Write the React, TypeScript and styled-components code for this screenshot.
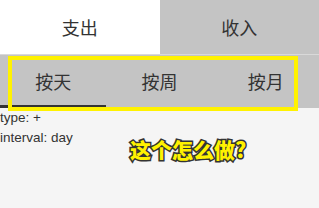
import React, { useState } from "react";
import styled, { createGlobalStyle } from "styled-components";

const Global = createGlobalStyle`
  html, body {
    margin: 0;
    padding: 0;
    background: #f5f5f5;
  }
  body {
    font-family: "Liberation Sans", Arial, "Noto Sans CJK SC", sans-serif;
    color: #333;
  }
`;

const Page = styled.div`
  position: relative;
  width: 319px;
  height: 208px;
  background: #f5f5f5;
  overflow: hidden;
`;

const TypeTabs = styled.div`
  display: grid;
  grid-template-columns: 1fr 1fr;
  height: 54px;
  border-bottom: 1px solid #d9d9d9;
`;

const TypeTab = styled.div<{ $active: boolean }>`
  display: flex;
  align-items: center;
  justify-content: center;
  background: ${(p) => (p.$active ? "#ffffff" : "#c4c4c4")};
  font-family: "Noto Sans CJK SC", sans-serif;
  font-size: 18px;
  color: #333;
  cursor: pointer;
`;

const IntervalTabs = styled.div`
  display: grid;
  grid-template-columns: repeat(3, 1fr);
  height: 53px;
  background: #c4c4c4;
`;

const IntervalTab = styled.div<{ $active: boolean }>`
  display: flex;
  align-items: center;
  justify-content: center;
  box-sizing: border-box;
  padding-top: 2px;
  border-bottom: 3px solid ${(p) => (p.$active ? "#333" : "transparent")};
  font-family: "Noto Sans CJK SC", sans-serif;
  font-size: 18px;
  color: #333;
  cursor: pointer;
`;

const Info = styled.div`
  display: flex;
  flex-direction: column;
  font-family: "Liberation Sans", Arial, sans-serif;
  font-size: 13.5px;
  line-height: 20px;
  color: #333;
`;

const Highlight = styled.div`
  position: absolute;
  left: 8px;
  top: 56px;
  width: 290px;
  height: 55px;
  box-sizing: border-box;
  border: 4px solid #fff200;
  pointer-events: none;
`;

const Note = styled.div`
  position: absolute;
  left: 130px;
  top: 136px;
  font-family: "Noto Sans CJK SC", sans-serif;
  font-weight: 900;
  font-size: 21px;
  line-height: 26px;
  color: #fff200;
  -webkit-text-stroke: 3px #333;
  paint-order: stroke fill;
  white-space: nowrap;
`;

export default function App() {
  const [type, setType] = useState("-");
  const [interval, setInterval] = useState("day");
  return (
    <Page>
      <Global />
      <TypeTabs>
        <TypeTab $active={type === "-"} onClick={() => setType("-")}>支出</TypeTab>
        <TypeTab $active={type === "+"} onClick={() => setType("+")}>收入</TypeTab>
      </TypeTabs>
      <IntervalTabs>
        <IntervalTab $active={interval === "day"} onClick={() => setInterval("day")}>按天</IntervalTab>
        <IntervalTab $active={interval === "week"} onClick={() => setInterval("week")}>按周</IntervalTab>
        <IntervalTab $active={interval === "month"} onClick={() => setInterval("month")}>按月</IntervalTab>
      </IntervalTabs>
      <Info>
        <span>type: +</span>
        <span>interval: {interval}</span>
      </Info>
      <Highlight />
      <Note>这个怎么做?</Note>
    </Page>
  );
}
